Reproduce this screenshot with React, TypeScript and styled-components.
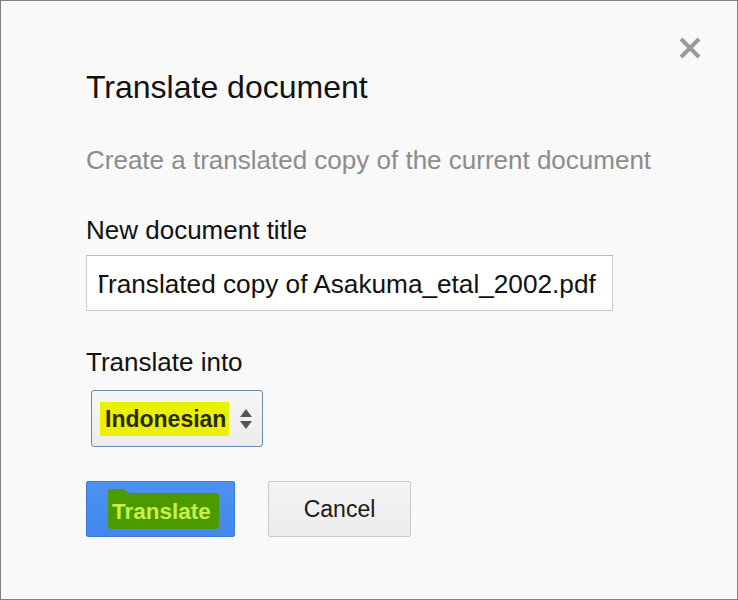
import React from 'react'
import styled, { createGlobalStyle } from 'styled-components'

const Global = createGlobalStyle`
  html, body { margin: 0; padding: 0; background: #f9f9f9; }
  body { font-family: "Liberation Sans", Arial, sans-serif; }
`

const Dialog = styled.div`
  position: relative;
  width: 738px;
  height: 600px;
  box-sizing: border-box;
  border: 1px solid #808080;
  background: #f9f9f9;
  padding: 68px 0 0 85px;
  display: flex;
  flex-direction: column;
  align-items: flex-start;
`

const Close = styled.button`
  position: absolute;
  top: 35px;
  right: 35px;
  width: 24px;
  height: 24px;
  padding: 0;
  border: none;
  background: none;
  cursor: pointer;
`

const Title = styled.div`
  font-size: 32px;
  line-height: 36px;
  color: #111;
`

const Subtitle = styled.div`
  margin-top: 40px;
  font-size: 26px;
  line-height: 30px;
  color: #8c8c8c;
`

const Label = styled.div<{ gap: number }>`
  margin-top: ${p => p.gap}px;
  font-size: 26px;
  line-height: 30px;
  color: #111;
`

// the value is scrolled a little, so the first letter is clipped at the left like the original
const TitleField = styled.div`
  margin-top: 10px;
  width: 527px;
  height: 56px;
  box-sizing: border-box;
  border: 1px solid #c8c8c8;
  border-top-color: #bdbdbd;
  background: #fff;
  padding: 0 10px 0 12px;
  display: flex;
  align-items: center;
`

const FieldClip = styled.div`
  flex: 1;
  overflow: hidden;
  white-space: nowrap;
  font-size: 26.2px;
  line-height: 34px;
  color: #111;
`

const FieldText = styled.span`
  display: inline-block;
  margin-left: -6px;
  padding-top: 2px;
`

const Select = styled.div`
  margin-top: 13px;
  margin-left: 5px;
  width: 172px;
  height: 57px;
  box-sizing: border-box;
  border: 1px solid #6b89b3;
  border-radius: 3px;
  background: linear-gradient(#f6f6f6, #ececec);
  padding: 0 0 0 8px;
  display: flex;
  align-items: center;
`

const Highlight = styled.span`
  background: #eaf000;
  padding: 1px 3px 0 5px;
  height: 33px;
  display: flex;
  align-items: center;
  font-size: 23px;
  font-weight: bold;
  color: #2a2a10;
`

const Arrows = styled.svg`
  margin-left: 10px;
`

const Buttons = styled.div`
  margin-top: 34px;
  display: flex;
  gap: 33px;
`

const Primary = styled.button`
  width: 149px;
  height: 56px;
  box-sizing: border-box;
  border: 1px solid #3a78d8;
  border-radius: 2px;
  background: linear-gradient(#4d91f2, #4587ec);
  padding: 0 0 0 21px;
  display: flex;
  align-items: center;
  cursor: pointer;
`

const Tag = styled.span`
  position: relative;
  height: 34px;
  padding: 2px 8px 0 4px;
  display: flex;
  align-items: center;
  background: #4a9a00;
  border-radius: 0 3px 3px 3px;
  font-family: "Liberation Sans", Arial, sans-serif;
  font-size: 22.5px;
  font-weight: bold;
  color: #c9f04a;
  margin-top: 4px;
  &::before {
    content: "";
    position: absolute;
    top: -4px;
    left: 0;
    width: 22px;
    height: 5px;
    background: #4a9a00;
    border-radius: 3px 3px 0 0;
    clip-path: polygon(0 0, 70% 0, 100% 100%, 0 100%);
  }
`

const Secondary = styled.button`
  width: 143px;
  height: 56px;
  box-sizing: border-box;
  border: 1px solid #c9c9c9;
  border-radius: 2px;
  background: linear-gradient(#f4f4f4, #ececec);
  font-family: "Liberation Sans", Arial, sans-serif;
  font-size: 23px;
  color: #1a1a1a;
  padding-top: 2px;
  cursor: pointer;
`

export default function App() {
  return (
    <>
      <Global />
      <Dialog>
        <Close aria-label="Close">
          <svg width="24" height="24" viewBox="0 0 24 24">
            <path d="M3 3 L21 21 M21 3 L3 21" stroke="#9a9a9a" strokeWidth="4" />
          </svg>
        </Close>
        <Title>Translate document</Title>
        <Subtitle>Create a translated copy of the current document</Subtitle>
        <Label gap={40}>New document title</Label>
        <TitleField>
          <FieldClip>
            <FieldText>Translated copy of Asakuma_etal_2002.pdf</FieldText>
          </FieldClip>
        </TitleField>
        <Label gap={36}>Translate into</Label>
        <Select>
          <Highlight>Indonesian</Highlight>
          <Arrows width="14" height="22" viewBox="0 0 14 22">
            <path d="M7 1 L13 9 L1 9 Z" fill="#555" />
            <path d="M1 13 L13 13 L7 21 Z" fill="#555" />
          </Arrows>
        </Select>
        <Buttons>
          <Primary>
            <Tag>Translate</Tag>
          </Primary>
          <Secondary>Cancel</Secondary>
        </Buttons>
      </Dialog>
    </>
  )
}
